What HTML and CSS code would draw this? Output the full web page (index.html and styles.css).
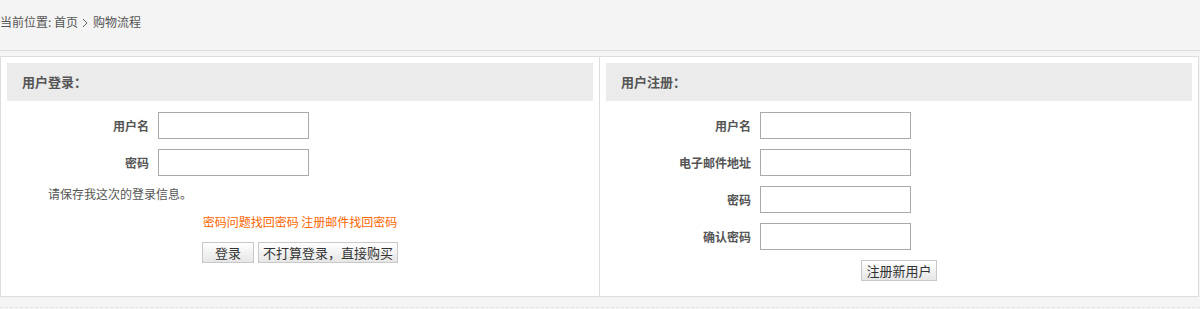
FILE: index.html
```html
<!doctype html>
<html lang="zh-CN">
<head>
<meta charset="utf-8">
<title>购物流程 - 用户登录</title>
<meta name="viewport" content="width=device-width, initial-scale=1">
<link rel="stylesheet" href="styles.css">
</head>
<body>

<!-- 面包屑 -->
<div class="crumb">当前位置: <a href="#">首页</a><svg class="sep" width="6" height="10" viewBox="0 0 6 10"><polyline points="1,1 5,5 1,9" fill="none" stroke="#666" stroke-width="1"/></svg>购物流程</div>

<div class="wrap">
  <!-- 登录 -->
  <div class="col col-login">
    <h3 class="col-title">用户登录：</h3>
    <div class="form form-login">
      <label class="lbl">用户名</label><input class="ipt" type="text">
      <label class="lbl">密码</label><input class="ipt" type="password">
    </div>
    <p class="remember">请保存我这次的登录信息。</p>
    <p class="links"><a href="#">密码问题找回密码</a> <a href="#">注册邮件找回密码</a></p>
    <div class="btns">
      <button class="btn btn-login" type="button">登录</button>
      <button class="btn" type="button">不打算登录，直接购买</button>
    </div>
  </div>

  <!-- 注册 -->
  <div class="col col-reg">
    <h3 class="col-title">用户注册：</h3>
    <div class="form form-reg">
      <label class="lbl">用户名</label><input class="ipt" type="text">
      <label class="lbl">电子邮件地址</label><input class="ipt" type="text">
      <label class="lbl">密码</label><input class="ipt" type="password">
      <label class="lbl">确认密码</label><input class="ipt" type="password">
    </div>
    <div class="btns btns-reg">
      <button class="btn" type="button">注册新用户</button>
    </div>
  </div>
</div>

<div class="foot"></div>

</body>
</html>
```

FILE: styles.css
```css
*{box-sizing:border-box;margin:0;padding:0;}
body{
  font-family:"Noto Sans CJK SC","Liberation Sans",sans-serif;
  font-size:12px;
  color:#555;
  background:#f4f4f4;
  width:1200px;
}
a{color:inherit;text-decoration:none;}

.crumb{height:51px;line-height:44px;border-bottom:1px solid #ddd;color:#555;}
.crumb .sep{margin:0 5px 0 4px;vertical-align:-1px;}

.wrap{
  margin-top:5px;
  width:1199px;
  display:flex;
  background:#fff;
  border:1px solid #ddd;
}
.col{padding:6px;}
.col-login{width:599px;border-right:1px solid #ddd;}
.col-reg{flex:1;padding-bottom:15px;}

.col-title{
  height:38px;
  line-height:38px;
  padding-left:15px;
  background:#ebebeb;
  font-size:13px;
  font-weight:bold;
  color:#555;
}

.form{display:grid;row-gap:10px;column-gap:9px;align-items:center;margin-top:11px;}
.form-login{grid-template-columns:142px 151px;}
.form-reg{grid-template-columns:145px 151px;}
.lbl{text-align:right;font-weight:bold;color:#555;}
.ipt{width:151px;height:27px;border:1px solid #aaa;background:#fff;padding:0 4px;}

.remember{margin:9px 0 0 41px;line-height:18px;color:#555;}
.links{margin-top:10px;line-height:18px;text-align:center;color:#f60;}

.btns{display:flex;justify-content:center;gap:4px;margin-top:11px;}
.btns-reg{margin-top:10px;}
.btn{
  height:21px;
  padding:0 4px;
  font-family:"Noto Sans CJK SC",sans-serif;
  font-size:13px;
  line-height:19px;
  color:#333;
  background:linear-gradient(#fff,#e6e6e6);
  border:1px solid #c8c8c8;
}
.btn-login{width:52px;}

.foot{margin-top:10px;border-top:1px dashed #e2e2e2;height:2px;}
```
